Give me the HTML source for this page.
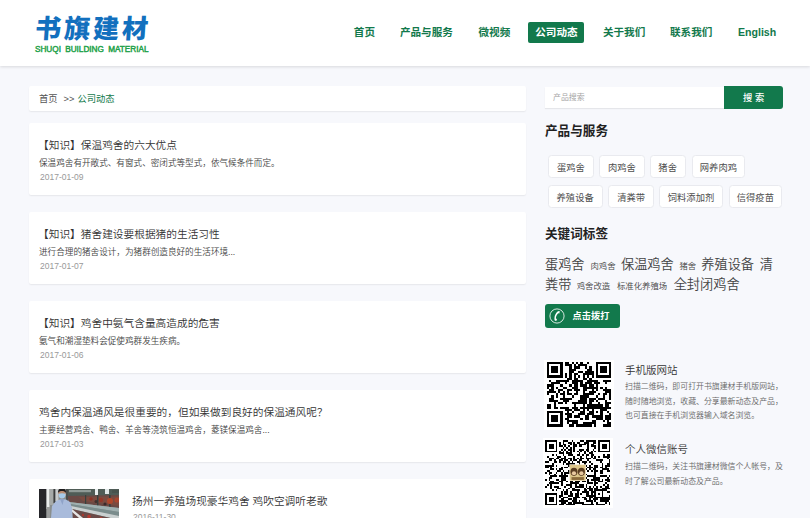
<!DOCTYPE html>
<html lang="zh-CN">
<head>
<meta charset="utf-8">
<title>公司动态 - 书旗建材</title>
<style>
*{margin:0;padding:0;box-sizing:border-box}
html,body{width:810px;height:518px;overflow:hidden}
body{background:#f7f8fc;font-family:"Liberation Sans","Noto Sans CJK SC",sans-serif;color:#333;position:relative}
a{text-decoration:none;color:inherit}
.header{position:absolute;left:0;top:0;width:810px;height:66px;background:#fff;box-shadow:0 1px 3px rgba(0,0,0,.13)}
.logo{position:absolute;left:34px;top:10px;width:120px;height:46px}
.logo .cn{position:absolute;left:.3px;top:3px;font-size:26px;line-height:32px;font-weight:900;color:#1270be;letter-spacing:3px;white-space:nowrap;transform-origin:0 100%;transform:skewX(-4deg)}
.logo .en{position:absolute;left:1px;top:34.600px;font-size:8.2px;line-height:9px;font-weight:normal;color:#1fa24a;-webkit-text-stroke:.45px #1fa24a;white-space:nowrap;word-spacing:2px}
.nav{position:absolute;left:-0.6px;top:21.700px;height:21px;width:810px}
.nav a{position:absolute;top:0;height:21px;line-height:21.500px;font-size:10.6px;font-weight:700;color:#12794c;white-space:nowrap;text-align:center;border-radius:2px}
.nav a.on{background:#12794c;color:#fff}
.box{position:absolute;background:#fff;border-radius:2px;box-shadow:0 1px 1.5px rgba(0,0,0,.07)}
.crumb{left:29px;top:86px;width:496.6px;height:24.5px;font-size:9.3px;line-height:26px;padding-left:10px;color:#555;white-space:nowrap}
.crumb i{font-style:normal;margin:0 3px 0 6px}
.crumb span{color:#12794c}
.card{left:29px;width:496.6px;height:72.400px}
.card h3{position:absolute;left:10px;top:14px;font-size:10.7px;line-height:16px;font-weight:350;color:#333;white-space:nowrap}
.card h3.k{left:9px}
.card p{position:absolute;left:10px;top:34px;font-size:8.6px;line-height:12px;font-weight:350;color:#444;white-space:nowrap}
.card time{position:absolute;left:11px;top:49px;font-size:8.5px;line-height:11px;color:#999}

.card5 .pic{position:absolute;left:10.400px;top:10.300px;width:80px;height:53px;overflow:hidden}
.card5 h3{left:103px;top:14px}
.card5 time{left:104px;top:33px}
.search{position:absolute;left:545px;top:86px;width:238px;height:22.600px}
.search .inp{position:absolute;left:0;top:.6px;width:179px;height:21.600px;background:#fff;box-shadow:0 1px 1px rgba(0,0,0,.07);font-size:7.9px;line-height:22px;color:#a5a5a5;padding-left:8px}
.search .btn{position:absolute;left:179px;top:0;width:59.2px;height:22.600px;background:#12794c;border-radius:0 3px 3px 0;color:#fff;font-size:9.3px;font-weight:500;line-height:24px;text-align:center}
.sh{position:absolute;left:545px;font-size:12.6px;line-height:18px;font-weight:bold;color:#222;white-space:nowrap}
.tag{position:absolute;height:22.600px;background:#fff;border:1px solid #e9eaef;border-radius:3.500px;font-size:9.3px;line-height:24px;text-align:center;color:#4d4d4d;white-space:nowrap}
.cloud{position:absolute;white-space:nowrap;color:#444;font-weight:350}
.cloud.b{font-size:13.2px;line-height:20px}
.cloud.s{font-size:8.4px;line-height:12px;font-weight:350}
.call{position:absolute;left:545px;top:304px;width:75px;height:24px;background:#12794c;border-radius:3px;color:#fff}
.call svg{position:absolute;left:3.7px;top:3.800px;width:16px;height:16px}
.call span{position:absolute;left:27.600px;top:0;font-size:9.2px;line-height:24px;font-weight:bold;white-space:nowrap}
.qr{position:absolute;left:543px;width:70px;height:70px;background:#fff}
.qr svg{position:absolute;left:2.5px;top:2.5px;width:65px;height:65px}
.qt{position:absolute;left:625px;font-size:10.5px;line-height:16px;color:#333;font-weight:350;white-space:nowrap}
.qd{position:absolute;left:625px;font-size:7.9px;line-height:14.8px;color:#666;font-weight:350;white-space:nowrap}
</style>
</head>
<body>
<div class="header">
  <div class="logo"><div class="cn">书旗建材</div><div class="en">SHUQI BUILDING MATERIAL</div></div>
  <div class="nav">
    <a style="left:346px;width:38px">首页</a>
    <a style="left:392px;width:70px">产品与服务</a>
    <a style="left:470px;width:50px">微视频</a>
    <a class="on" style="left:529px;width:56px">公司动态</a>
    <a style="left:596.700px;width:56px">关于我们</a>
    <a style="left:663.800px;width:56px">联系我们</a>
    <a style="left:730.700px;width:54px;font-weight:bold">English</a>
  </div>
</div>

<div class="box crumb">首页<i>&gt;&gt;</i><span>公司动态</span></div>

<div class="box card" style="top:123px"><h3 class="k">【知识】保温鸡舍的六大优点</h3><p>保温鸡舍有开敞式、有窗式、密闭式等型式，依气候条件而定。</p><time>2017-01-09</time></div>
<div class="box card" style="top:212px"><h3 class="k">【知识】猪舍建设要根据猪的生活习性</h3><p>进行合理的猪舍设计，为猪群创造良好的生活环境...</p><time>2017-01-07</time></div>
<div class="box card" style="top:301px"><h3 class="k">【知识】鸡舍中氨气含量高造成的危害</h3><p>氨气和潮湿垫料会促使鸡群发生疾病。</p><time>2017-01-06</time></div>
<div class="box card" style="top:390px"><h3>鸡舍内保温通风是很重要的，但如果做到良好的保温通风呢？</h3><p>主要经营鸡舍、鸭舍、羊舍等浇筑恒温鸡舍，菱镁保温鸡舍...</p><time>2017-01-03</time></div>
<div class="box card card5" style="top:479px"><div class="pic"><svg viewBox="0 0 80 53" width="80" height="53"><defs><filter id="bl" x="-5%" y="-5%" width="110%" height="110%"><feGaussianBlur stdDeviation="0.55"/></filter></defs><rect width="80" height="53" fill="#7d817f"/><g filter="url(#bl)">
<rect x="0" y="0" width="80" height="53" fill="#8a8f8e"/>
<rect x="27" y="0" width="53" height="7" fill="#4f5b57"/>
<rect x="30" y="1" width="22" height="2.200" fill="#8f9a96"/><rect x="56" y="0" width="3" height="6" fill="#e8eeee"/><rect x="66" y="0" width="4" height="5" fill="#dfe6e6"/><rect x="73" y="1" width="7" height="3" fill="#48524e"/>
<polygon points="28,7 80,6 80,19 30,13" fill="#6a4a44"/>
<polygon points="40,8 80,7.500 80,17 44,12" fill="#7a4c40"/><rect x="46" y="6" width="1.200" height="9" fill="#39403e"/><rect x="58" y="6" width="1.400" height="11" fill="#39403e"/><rect x="70" y="6" width="1.600" height="12" fill="#39403e"/>
<circle cx="71" cy="12" r="3" fill="#b0472c"/><circle cx="78" cy="11" r="2.600" fill="#a8452e"/><circle cx="62" cy="11" r="2.200" fill="#93392a"/><circle cx="52" cy="10" r="1.800" fill="#8a3528"/><circle cx="66" cy="15" r="1.600" fill="#3b2a2a"/><circle cx="57" cy="12.500" r="1.500" fill="#40302e"/>
<polygon points="30,13 80,19 80,23 31,15" fill="#9fb0b0"/>
<polygon points="31,15 80,23 80,27 32,17" fill="#7a8c8c"/>
<polygon points="32,17 80,27 80,31 33,20" fill="#c9d0d0"/>
<polygon points="33,20 80,31 80,53 36,53" fill="#6a4c48"/>
<polygon points="33,20 44,29 40,29 32,22" fill="#e6e6e6"/>
<circle cx="50" cy="27.500" r="1.800" fill="#b83a30"/><circle cx="62" cy="29.500" r="1.600" fill="#c04436"/><circle cx="44" cy="26" r="1.200" fill="#a83830"/>
<rect x="0" y="0" width="7.500" height="53" fill="#26262b"/>
<rect x="7.500" y="0" width="3" height="20" fill="#e9ecec"/><rect x="7.500" y="18" width="3.500" height="35" fill="#9a9c9c"/>
<rect x="10.500" y="0" width="4" height="16" fill="#a6aaa8"/>
<rect x="14.500" y="0" width="2" height="14" fill="#3a3d3c"/><rect x="16.500" y="0" width="3" height="12" fill="#c8cccc"/>
<rect x="27" y="0" width="2" height="12" fill="#4a4f4d"/>
<polygon points="12,29 13,17 17,12 22,10 27,10.500 31,13 33,19 33.500,29" fill="#a9bbdb"/>
<polygon points="12,53 12,29 33.500,29 34,53" fill="#a9bbdb"/>
<polygon points="21,10 25,10 23.500,16" fill="#8fa3c8"/>
<ellipse cx="23" cy="4.500" rx="3.900" ry="5" fill="#b98d72"/>
<path d="M19 4c0-3.500 1.800-4.700 4-4.700s4.200 1.200 4 4.700c-1-1.600-2.400-2-4-2s-3.200.4-4 2z" fill="#1d1b1c"/>
<path d="M19.300 4.800c2.400-.9 5-.9 7.400 0 .1 2.600-1.300 4.800-3.700 4.800s-3.800-2.200-3.700-4.800z" fill="#a6cbea"/>
</g></svg></div><h3>扬州一养殖场现豪华鸡舍 鸡吹空调听老歌</h3><time>2016-11-30</time></div>
<div class="search"><div class="inp">产品搜索</div><div class="btn">搜 索</div></div>
<div class="sh" style="top:121.800px">产品与服务</div>
<div class="tag" style="left:547.7px;top:155.2px;width:46.4px">蛋鸡舍</div>
<div class="tag" style="left:598.7px;top:155.2px;width:46.4px">肉鸡舍</div>
<div class="tag" style="left:649.7px;top:155.2px;width:35.9px">猪舍</div>
<div class="tag" style="left:691.7px;top:155.2px;width:53.4px">网养肉鸡</div>
<div class="tag" style="left:547.7px;top:185.4px;width:54.9px">养殖设备</div>
<div class="tag" style="left:607.9px;top:185.4px;width:46.4px">清粪带</div>
<div class="tag" style="left:659.2px;top:185.4px;width:63.6px">饲料添加剂</div>
<div class="tag" style="left:728.7px;top:185.4px;width:53.3px">信得疫苗</div>
<div class="sh" style="top:224.600px">关键词标签</div>
<div class="cloud b" style="left:545px;top:255px">蛋鸡舍</div>
<div class="cloud s" style="left:590.5px;top:260px">肉鸡舍</div>
<div class="cloud b" style="left:621px;top:255px">保温鸡舍</div>
<div class="cloud s" style="left:679.5px;top:260px">猪舍</div>
<div class="cloud b" style="left:701.3px;top:255px">养殖设备</div>
<div class="cloud b" style="left:759.7px;top:255px">清</div>
<div class="cloud b" style="left:545px;top:274.700px">粪带</div>
<div class="cloud s" style="left:576.7px;top:279.500px">鸡舍改造</div>
<div class="cloud s" style="left:616.9px;top:279.500px">标准化养殖场</div>
<div class="cloud b" style="left:673.7px;top:274.700px">全封闭鸡舍</div>
<div class="call"><svg viewBox="0 0 16 16"><circle cx="8" cy="8" r="7.100" fill="none" stroke="#fff" stroke-width="0.9" opacity=".92"/><path d="M10.700 2.900L9 3.200C6.300 5.200 4.900 9 5.700 12.500L7.300 13L8 11.100L6.900 10.600C6.800 8.700 7.700 6.500 9.200 5.200L10.400 5.400Z" fill="#fff"/></svg><span>点击拨打</span></div>
<div class="qr" style="left:544px;top:359.500px"><svg style="left:2.600px;top:2.500px;width:64.600px;height:64.600px" viewBox="0 0 29 29" shape-rendering="crispEdges"><path fill="#000" d="M0 0h7v1h-7zM8 0h2v1h-2zM11 0h1v1h-1zM13 0h1v1h-1zM15 0h1v1h-1zM18 0h1v1h-1zM22 0h7v1h-7zM0 1h1v1h-1zM6 1h1v1h-1zM8 1h3v1h-3zM12 1h1v1h-1zM14 1h4v1h-4zM22 1h1v1h-1zM28 1h1v1h-1zM0 2h1v1h-1zM2 2h3v1h-3zM6 2h1v1h-1zM10 2h1v1h-1zM12 2h3v1h-3zM17 2h1v1h-1zM19 2h1v1h-1zM22 2h1v1h-1zM24 2h3v1h-3zM28 2h1v1h-1zM0 3h1v1h-1zM2 3h3v1h-3zM6 3h1v1h-1zM10 3h3v1h-3zM18 3h2v1h-2zM22 3h1v1h-1zM24 3h3v1h-3zM28 3h1v1h-1zM0 4h1v1h-1zM2 4h3v1h-3zM6 4h1v1h-1zM10 4h2v1h-2zM14 4h2v1h-2zM17 4h4v1h-4zM22 4h1v1h-1zM24 4h3v1h-3zM28 4h1v1h-1zM0 5h1v1h-1zM6 5h1v1h-1zM8 5h1v1h-1zM10 5h1v1h-1zM12 5h2v1h-2zM16 5h5v1h-5zM22 5h1v1h-1zM28 5h1v1h-1zM0 6h7v1h-7zM8 6h1v1h-1zM10 6h1v1h-1zM12 6h1v1h-1zM14 6h1v1h-1zM16 6h1v1h-1zM18 6h1v1h-1zM20 6h1v1h-1zM22 6h7v1h-7zM9 7h2v1h-2zM12 7h2v1h-2zM16 7h2v1h-2zM19 7h1v1h-1zM1 8h1v1h-1zM4 8h6v1h-6zM11 8h5v1h-5zM18 8h5v1h-5zM25 8h4v1h-4zM2 9h4v1h-4zM8 9h1v1h-1zM11 9h3v1h-3zM15 9h1v1h-1zM17 9h3v1h-3zM21 9h3v1h-3zM26 9h1v1h-1zM0 10h3v1h-3zM6 10h1v1h-1zM10 10h1v1h-1zM12 10h2v1h-2zM15 10h3v1h-3zM19 10h2v1h-2zM22 10h1v1h-1zM0 11h1v1h-1zM2 11h1v1h-1zM4 11h1v1h-1zM7 11h2v1h-2zM11 11h3v1h-3zM16 11h7v1h-7zM24 11h1v1h-1zM26 11h1v1h-1zM1 12h2v1h-2zM5 12h2v1h-2zM9 12h2v1h-2zM12 12h3v1h-3zM16 12h2v1h-2zM20 12h1v1h-1zM22 12h1v1h-1zM25 12h4v1h-4zM0 13h4v1h-4zM5 13h1v1h-1zM7 13h1v1h-1zM9 13h1v1h-1zM13 13h1v1h-1zM16 13h1v1h-1zM19 13h3v1h-3zM26 13h3v1h-3zM0 14h1v1h-1zM4 14h1v1h-1zM6 14h2v1h-2zM9 14h2v1h-2zM12 14h2v1h-2zM16 14h5v1h-5zM23 14h1v1h-1zM25 14h2v1h-2zM28 14h1v1h-1zM2 15h1v1h-1zM4 15h1v1h-1zM7 15h1v1h-1zM11 15h1v1h-1zM15 15h4v1h-4zM22 15h1v1h-1zM25 15h1v1h-1zM28 15h1v1h-1zM1 16h2v1h-2zM6 16h5v1h-5zM15 16h3v1h-3zM19 16h3v1h-3zM23 16h3v1h-3zM28 16h1v1h-1zM1 17h4v1h-4zM7 17h3v1h-3zM14 17h4v1h-4zM19 17h2v1h-2zM22 17h1v1h-1zM26 17h1v1h-1zM3 18h1v1h-1zM5 18h2v1h-2zM8 18h1v1h-1zM11 18h7v1h-7zM19 18h1v1h-1zM23 18h1v1h-1zM26 18h3v1h-3zM0 19h2v1h-2zM3 19h1v1h-1zM12 19h1v1h-1zM16 19h1v1h-1zM18 19h7v1h-7zM26 19h2v1h-2zM0 20h2v1h-2zM3 20h2v1h-2zM6 20h4v1h-4zM11 20h3v1h-3zM15 20h14v1h-14zM8 21h3v1h-3zM12 21h3v1h-3zM16 21h1v1h-1zM18 21h1v1h-1zM20 21h1v1h-1zM24 21h3v1h-3zM0 22h7v1h-7zM9 22h1v1h-1zM11 22h1v1h-1zM15 22h2v1h-2zM19 22h2v1h-2zM22 22h1v1h-1zM24 22h1v1h-1zM27 22h1v1h-1zM0 23h1v1h-1zM6 23h1v1h-1zM8 23h3v1h-3zM14 23h3v1h-3zM18 23h3v1h-3zM24 23h1v1h-1zM28 23h1v1h-1zM0 24h1v1h-1zM2 24h3v1h-3zM6 24h1v1h-1zM9 24h2v1h-2zM12 24h3v1h-3zM17 24h2v1h-2zM20 24h5v1h-5zM26 24h3v1h-3zM0 25h1v1h-1zM2 25h3v1h-3zM6 25h1v1h-1zM8 25h2v1h-2zM15 25h1v1h-1zM17 25h2v1h-2zM22 25h3v1h-3zM26 25h3v1h-3zM0 26h1v1h-1zM2 26h3v1h-3zM6 26h1v1h-1zM9 26h5v1h-5zM20 26h2v1h-2zM25 26h1v1h-1zM27 26h1v1h-1zM0 27h1v1h-1zM6 27h1v1h-1zM9 27h1v1h-1zM11 27h3v1h-3zM16 27h6v1h-6zM27 27h2v1h-2zM0 28h7v1h-7zM10 28h2v1h-2zM13 28h7v1h-7zM21 28h1v1h-1zM25 28h4v1h-4z"/></svg></div>
<div class="qt" style="left:625px;top:362px">手机版网站</div>
<div class="qd" style="top:379.8px">扫描二维码，即可打开书旗建材手机版网站，<br>随时随地浏览，收藏、分享最新动态及产品，<br>也可直接在手机浏览器输入域名浏览。</div>
<div class="qr" style="left:543.200px;top:438px"><svg style="left:2.200px;top:2.200px;width:65.400px;height:65.400px" viewBox="0 0 37 37"><path fill="#000" shape-rendering="crispEdges" d="M0 0h7v1h-7zM10 0h3v1h-3zM15 0h1v1h-1zM20 0h2v1h-2zM23 0h6v1h-6zM30 0h7v1h-7zM0 1h1v1h-1zM6 1h1v1h-1zM8 1h1v1h-1zM10 1h1v1h-1zM13 1h2v1h-2zM16 1h1v1h-1zM18 1h2v1h-2zM22 1h3v1h-3zM27 1h2v1h-2zM30 1h1v1h-1zM36 1h1v1h-1zM0 2h1v1h-1zM2 2h3v1h-3zM6 2h1v1h-1zM8 2h1v1h-1zM10 2h2v1h-2zM14 2h1v1h-1zM16 2h2v1h-2zM19 2h4v1h-4zM24 2h1v1h-1zM26 2h2v1h-2zM30 2h1v1h-1zM32 2h3v1h-3zM36 2h1v1h-1zM0 3h1v1h-1zM2 3h3v1h-3zM6 3h1v1h-1zM8 3h2v1h-2zM11 3h1v1h-1zM13 3h1v1h-1zM16 3h2v1h-2zM19 3h2v1h-2zM24 3h1v1h-1zM26 3h3v1h-3zM30 3h1v1h-1zM32 3h3v1h-3zM36 3h1v1h-1zM0 4h1v1h-1zM2 4h3v1h-3zM6 4h1v1h-1zM10 4h1v1h-1zM12 4h1v1h-1zM14 4h1v1h-1zM16 4h1v1h-1zM24 4h1v1h-1zM28 4h1v1h-1zM30 4h1v1h-1zM32 4h3v1h-3zM36 4h1v1h-1zM0 5h1v1h-1zM6 5h1v1h-1zM9 5h1v1h-1zM11 5h1v1h-1zM13 5h2v1h-2zM16 5h1v1h-1zM19 5h3v1h-3zM23 5h2v1h-2zM27 5h1v1h-1zM30 5h1v1h-1zM36 5h1v1h-1zM0 6h7v1h-7zM8 6h1v1h-1zM10 6h1v1h-1zM12 6h1v1h-1zM14 6h1v1h-1zM16 6h1v1h-1zM18 6h1v1h-1zM20 6h1v1h-1zM22 6h1v1h-1zM24 6h1v1h-1zM26 6h1v1h-1zM28 6h1v1h-1zM30 6h7v1h-7zM8 7h3v1h-3zM12 7h3v1h-3zM19 7h1v1h-1zM22 7h1v1h-1zM25 7h2v1h-2zM4 8h1v1h-1zM6 8h1v1h-1zM10 8h1v1h-1zM13 8h3v1h-3zM18 8h2v1h-2zM21 8h1v1h-1zM23 8h2v1h-2zM26 8h2v1h-2zM33 8h1v1h-1zM35 8h2v1h-2zM1 9h1v1h-1zM7 9h2v1h-2zM11 9h1v1h-1zM16 9h1v1h-1zM20 9h1v1h-1zM23 9h1v1h-1zM26 9h1v1h-1zM28 9h1v1h-1zM30 9h1v1h-1zM33 9h4v1h-4zM2 10h3v1h-3zM6 10h2v1h-2zM9 10h3v1h-3zM13 10h2v1h-2zM16 10h1v1h-1zM18 10h1v1h-1zM20 10h2v1h-2zM23 10h3v1h-3zM27 10h2v1h-2zM35 10h1v1h-1zM2 11h2v1h-2zM5 11h1v1h-1zM8 11h2v1h-2zM11 11h2v1h-2zM14 11h1v1h-1zM16 11h2v1h-2zM19 11h2v1h-2zM24 11h1v1h-1zM29 11h4v1h-4zM36 11h1v1h-1zM0 12h2v1h-2zM5 12h2v1h-2zM8 12h1v1h-1zM10 12h2v1h-2zM13 12h1v1h-1zM15 12h1v1h-1zM18 12h2v1h-2zM21 12h3v1h-3zM25 12h1v1h-1zM31 12h1v1h-1zM36 12h1v1h-1zM4 13h1v1h-1zM10 13h1v1h-1zM12 13h5v1h-5zM19 13h1v1h-1zM22 13h1v1h-1zM26 13h1v1h-1zM32 13h1v1h-1zM35 13h2v1h-2zM0 14h5v1h-5zM6 14h1v1h-1zM13 14h1v1h-1zM16 14h1v1h-1zM18 14h4v1h-4zM23 14h1v1h-1zM25 14h1v1h-1zM28 14h2v1h-2zM32 14h1v1h-1zM34 14h3v1h-3zM0 15h2v1h-2zM3 15h1v1h-1zM9 15h1v1h-1zM11 15h2v1h-2zM14 15h1v1h-1zM18 15h1v1h-1zM22 15h1v1h-1zM24 15h3v1h-3zM28 15h2v1h-2zM31 15h2v1h-2zM34 15h1v1h-1zM3 16h2v1h-2zM6 16h1v1h-1zM8 16h2v1h-2zM15 16h2v1h-2zM20 16h4v1h-4zM25 16h1v1h-1zM27 16h2v1h-2zM32 16h4v1h-4zM1 17h2v1h-2zM7 17h2v1h-2zM10 17h1v1h-1zM13 17h1v1h-1zM17 17h3v1h-3zM21 17h2v1h-2zM24 17h1v1h-1zM26 17h1v1h-1zM28 17h2v1h-2zM31 17h2v1h-2zM35 17h2v1h-2zM0 18h1v1h-1zM2 18h2v1h-2zM6 18h1v1h-1zM9 18h1v1h-1zM11 18h3v1h-3zM16 18h7v1h-7zM28 18h1v1h-1zM31 18h2v1h-2zM2 19h1v1h-1zM5 19h1v1h-1zM9 19h1v1h-1zM11 19h1v1h-1zM14 19h2v1h-2zM19 19h2v1h-2zM23 19h1v1h-1zM28 19h1v1h-1zM3 20h4v1h-4zM8 20h5v1h-5zM14 20h3v1h-3zM19 20h3v1h-3zM24 20h5v1h-5zM31 20h4v1h-4zM36 20h1v1h-1zM2 21h2v1h-2zM9 21h3v1h-3zM14 21h1v1h-1zM17 21h1v1h-1zM20 21h4v1h-4zM27 21h4v1h-4zM35 21h1v1h-1zM0 22h1v1h-1zM2 22h1v1h-1zM6 22h2v1h-2zM9 22h3v1h-3zM15 22h1v1h-1zM17 22h1v1h-1zM19 22h1v1h-1zM21 22h1v1h-1zM24 22h1v1h-1zM26 22h5v1h-5zM32 22h1v1h-1zM34 22h3v1h-3zM3 23h2v1h-2zM8 23h2v1h-2zM12 23h1v1h-1zM14 23h2v1h-2zM17 23h3v1h-3zM21 23h2v1h-2zM24 23h1v1h-1zM28 23h1v1h-1zM30 23h3v1h-3zM35 23h2v1h-2zM2 24h6v1h-6zM9 24h1v1h-1zM14 24h5v1h-5zM24 24h3v1h-3zM28 24h2v1h-2zM34 24h1v1h-1zM1 25h1v1h-1zM3 25h1v1h-1zM9 25h1v1h-1zM12 25h3v1h-3zM17 25h1v1h-1zM19 25h3v1h-3zM23 25h1v1h-1zM28 25h1v1h-1zM33 25h1v1h-1zM35 25h1v1h-1zM0 26h1v1h-1zM3 26h1v1h-1zM5 26h3v1h-3zM11 26h1v1h-1zM14 26h1v1h-1zM17 26h5v1h-5zM23 26h1v1h-1zM25 26h1v1h-1zM27 26h1v1h-1zM29 26h1v1h-1zM31 26h1v1h-1zM34 26h2v1h-2zM3 27h1v1h-1zM7 27h2v1h-2zM13 27h1v1h-1zM15 27h2v1h-2zM22 27h1v1h-1zM24 27h3v1h-3zM28 27h2v1h-2zM32 27h5v1h-5zM4 28h1v1h-1zM6 28h1v1h-1zM10 28h1v1h-1zM12 28h1v1h-1zM15 28h5v1h-5zM22 28h2v1h-2zM25 28h2v1h-2zM28 28h7v1h-7zM9 29h1v1h-1zM11 29h2v1h-2zM14 29h1v1h-1zM18 29h1v1h-1zM21 29h4v1h-4zM26 29h3v1h-3zM32 29h1v1h-1zM35 29h2v1h-2zM0 30h7v1h-7zM9 30h1v1h-1zM11 30h2v1h-2zM14 30h2v1h-2zM17 30h2v1h-2zM20 30h1v1h-1zM23 30h2v1h-2zM26 30h1v1h-1zM28 30h1v1h-1zM30 30h1v1h-1zM32 30h1v1h-1zM0 31h1v1h-1zM6 31h1v1h-1zM8 31h2v1h-2zM13 31h3v1h-3zM17 31h2v1h-2zM23 31h6v1h-6zM32 31h1v1h-1zM36 31h1v1h-1zM0 32h1v1h-1zM2 32h3v1h-3zM6 32h1v1h-1zM8 32h1v1h-1zM10 32h3v1h-3zM16 32h4v1h-4zM21 32h2v1h-2zM25 32h2v1h-2zM28 32h9v1h-9zM0 33h1v1h-1zM2 33h3v1h-3zM6 33h1v1h-1zM9 33h2v1h-2zM13 33h2v1h-2zM16 33h2v1h-2zM22 33h2v1h-2zM25 33h1v1h-1zM27 33h3v1h-3zM31 33h6v1h-6zM0 34h1v1h-1zM2 34h3v1h-3zM6 34h1v1h-1zM8 34h5v1h-5zM15 34h3v1h-3zM19 34h1v1h-1zM23 34h4v1h-4zM28 34h1v1h-1zM31 34h5v1h-5zM0 35h1v1h-1zM6 35h1v1h-1zM9 35h3v1h-3zM13 35h2v1h-2zM16 35h6v1h-6zM26 35h1v1h-1zM29 35h1v1h-1zM34 35h1v1h-1zM36 35h1v1h-1zM0 36h7v1h-7zM8 36h3v1h-3zM12 36h5v1h-5zM21 36h7v1h-7zM29 36h5v1h-5zM36 36h1v1h-1z"/><rect x="13.800" y="13.800" width="9.400" height="9.400" fill="#fff"/><rect x="14" y="14" width="9" height="9" fill="#dcc58a"/><ellipse cx="16.400" cy="18" rx="2" ry="2.300" fill="#5a3d22"/><ellipse cx="20.600" cy="18" rx="2" ry="2.300" fill="#5a3d22"/><ellipse cx="16.400" cy="18.800" rx="1.200" ry="1.100" fill="#e8c9a0"/><ellipse cx="20.600" cy="18.800" rx="1.200" ry="1.100" fill="#e8c9a0"/><rect x="15" y="21" width="7" height="1.600" fill="#8a6a3a"/></svg></div>
<div class="qt" style="top:441px">个人微信账号</div>
<div class="qd" style="top:460px">扫描二维码，关注书旗建材微信个人帐号，及<br>时了解公司最新动态及产品。</div>


</body>
</html>
